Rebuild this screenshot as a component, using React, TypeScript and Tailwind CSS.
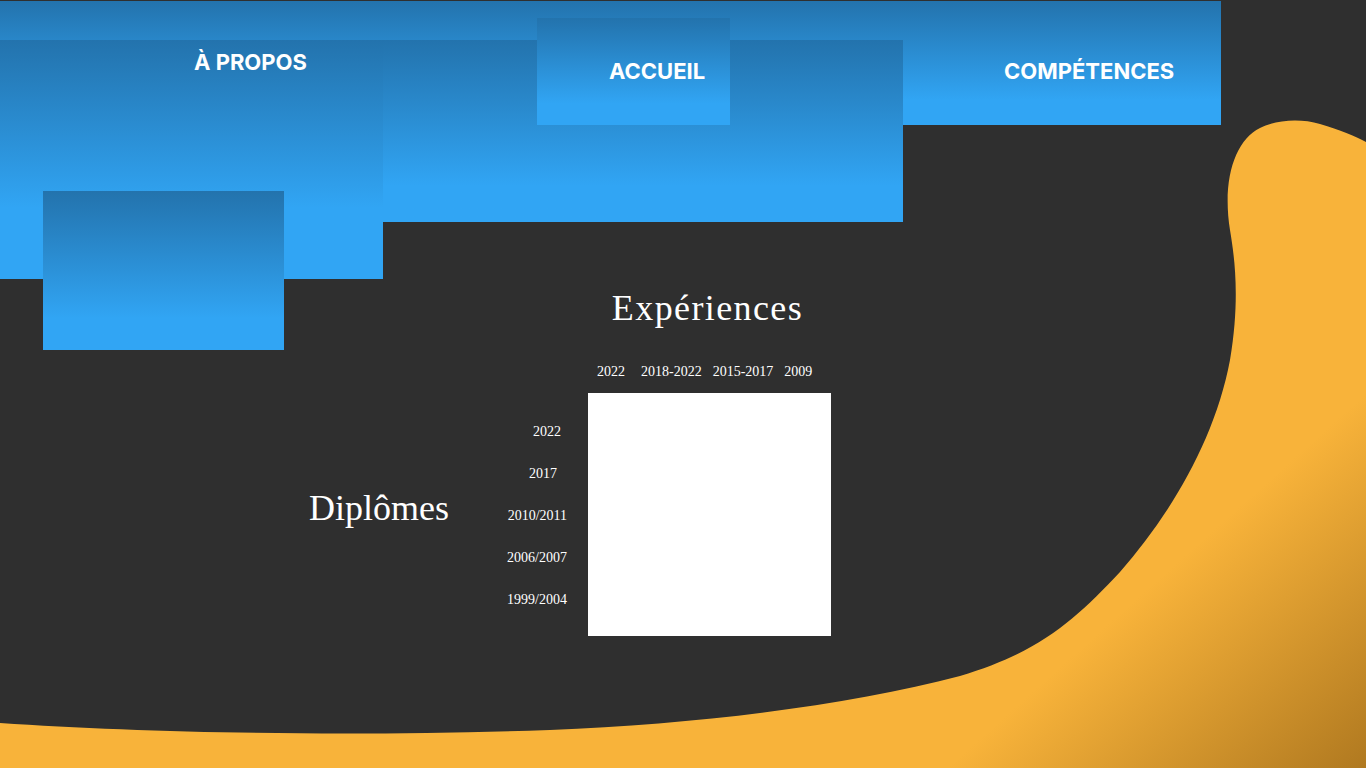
import React from "react";

const blue = "bg-linear-to-b from-[#2373ad] to-[#31a5f4]";

export default function App() {
  return (
    <div className="relative h-[768px] w-full overflow-hidden bg-[#2f2f2f] text-white">
      <svg
        className="absolute inset-0 h-full w-full"
        viewBox="0 0 1366 768"
        preserveAspectRatio="none"
        aria-hidden="true"
      >
        <defs>
          <linearGradient id="og" gradientUnits="userSpaceOnUse" x1="1180" y1="560" x2="1366" y2="768">
            <stop offset="0" stopColor="#f8b33a" />
            <stop offset="1" stopColor="#b07920" />
          </linearGradient>
        </defs>
        <path
          fill="url(#og)"
          d="M 0 723 C 150 733, 350 737, 550 730 C 700 724, 850 705, 960 676 C 1040 652, 1075 620, 1120 572 C 1170 515, 1215 440, 1230 360 C 1240 300, 1235 260, 1230 230 C 1222 180, 1235 140, 1260 128 C 1275 120, 1300 118, 1320 124 C 1340 130, 1355 136, 1366 142 L 1366 768 L 0 768 Z"
        />
      </svg>

      <header className={`relative mt-px h-[124px] w-[1221px] ${blue} to-80%`}>
        <div className={`absolute left-[383px] top-[39px] h-[182px] w-[520px] ${blue} to-80%`} />
        <div className={`absolute left-0 top-[39px] h-[239px] w-[383px] ${blue} to-70%`} />
        <div className={`absolute left-[537px] top-[17px] h-[107px] w-[193px] ${blue} to-80%`} />
        <div className={`absolute left-[43px] top-[190px] h-[159px] w-[241px] ${blue} to-80%`} />
        <nav
          className="relative grid grid-cols-[415px_395px_1fr] pl-[194px] font-bold text-[22px] leading-none"
          style={{ fontFamily: "Inter, 'Open Sans', sans-serif" }}
        >
          <a className="pt-[50px]">À PROPOS</a>
          <a className="pt-[59px]">ACCUEIL</a>
          <a className="pt-[59px]">COMPÉTENCES</a>
        </nav>
      </header>

      <section
        className="relative flex items-start pl-[309px] pt-[165px]"
        style={{ fontFamily: "'Liberation Serif', 'DejaVu Serif', serif" }}
      >
        <h2 className="mt-[200px] w-[195px] text-[36px] font-normal leading-none">Diplômes</h2>
        <div className="mt-[135px] flex w-[63px] flex-col items-end gap-[28px] text-[14px] leading-none">
          <span className="pr-[6px]">2022</span>
          <span className="pr-[10px]">2017</span>
          <span>2010/2011</span>
          <span>2006/2007</span>
          <span>1999/2004</span>
        </div>
        <div className="ml-[21px] flex w-[243px] flex-col">
          <h2 className="pr-[4px] text-center text-[36px] font-normal leading-none tracking-[1.4px]">Expériences</h2>
          <div className="mt-[39px] flex gap-[11px] pl-[9px] text-[14px] leading-none">
            <span className="mr-[5px]">2022</span>
            <span>2018-2022</span>
            <span>2015-2017</span>
            <span>2009</span>
          </div>
          <div className="mt-[14px] h-[243px] w-[243px] bg-white" />
        </div>
      </section>
    </div>
  );
}
